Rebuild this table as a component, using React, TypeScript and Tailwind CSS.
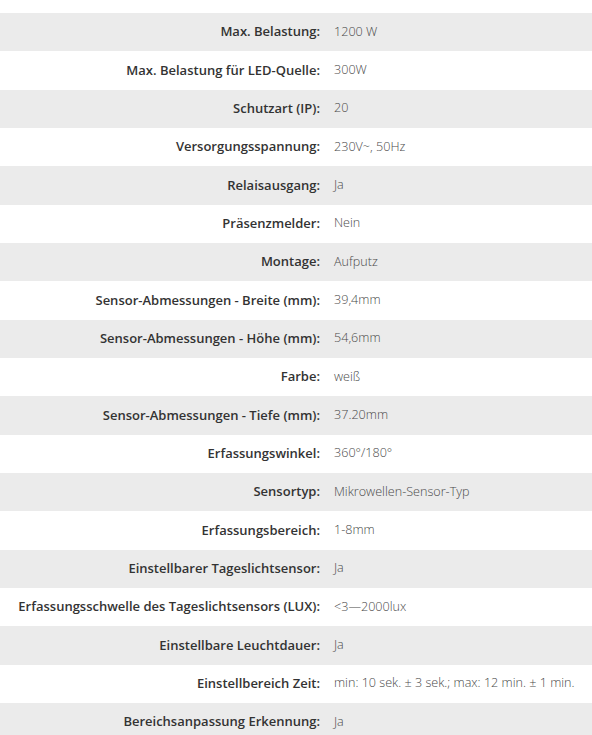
const rows: [string, string][] = [
  ['Max. Belastung:', '1200 W'],
  ['Max. Belastung für LED-Quelle:', '300W'],
  ['Schutzart (IP):', '20'],
  ['Versorgungsspannung:', '230V~, 50Hz'],
  ['Relaisausgang:', 'Ja'],
  ['Präsenzmelder:', 'Nein'],
  ['Montage:', 'Aufputz'],
  ['Sensor-Abmessungen - Breite (mm):', '39,4mm'],
  ['Sensor-Abmessungen - Höhe (mm):', '54,6mm'],
  ['Farbe:', 'weiß'],
  ['Sensor-Abmessungen - Tiefe (mm):', '37.20mm'],
  ['Erfassungswinkel:', '360°/180°'],
  ['Sensortyp:', 'Mikrowellen-Sensor-Typ'],
  ['Erfassungsbereich:', '1-8mm'],
  ['Einstellbarer Tageslichtsensor:', 'Ja'],
  ['Erfassungsschwelle des Tageslichtsensors (LUX):', '<3—2000lux'],
  ['Einstellbare Leuchtdauer:', 'Ja'],
  ['Einstellbereich Zeit:', 'min: 10 sek. ± 3 sek.; max: 12 min. ± 1 min.'],
  ['Bereichsanpassung Erkennung:', 'Ja'],
];

export default function App() {
  return (
    <div className="w-[592px] h-[735px] overflow-hidden bg-white font-['Open_Sans',sans-serif] text-[13px]">
      <div className="h-[13px]" />
      {rows.map(([label, value], i) => (
        <div
          key={label}
          className={`flex items-center h-[38.33px] ${i % 2 === 0 ? 'bg-[#ebebeb]' : 'bg-white'}`}
        >
          <div className="w-[320px] shrink-0 text-right font-semibold text-[#333333]">{label}</div>
          <div className="pl-[14px] text-[12.6px] font-light text-[#4a4a4a] whitespace-nowrap">{value}</div>
        </div>
      ))}
    </div>
  );
}
